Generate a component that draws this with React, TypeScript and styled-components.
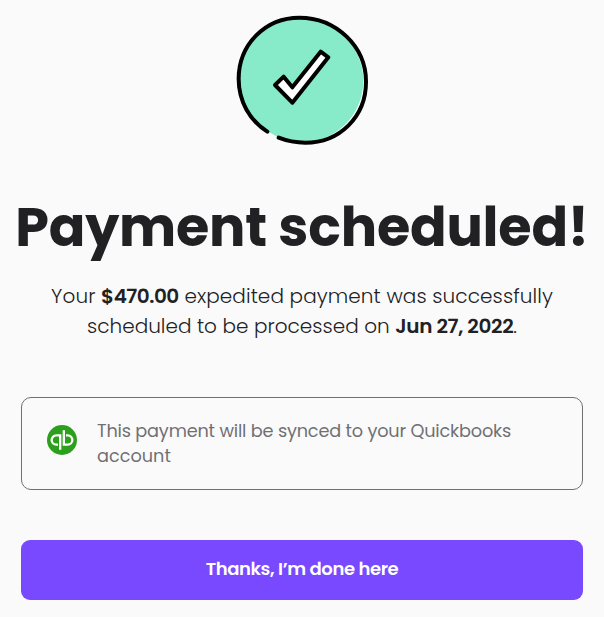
import React from 'react';
import styled, { createGlobalStyle } from 'styled-components';

const GlobalStyle = createGlobalStyle`
  * { box-sizing: border-box; }
  body {
    margin: 0;
    background: #fafafa;
    color: #212124;
    font-family: Poppins, Inter, "Liberation Sans", sans-serif;
  }
`;

const Page = styled.main`
  display: flex;
  flex-direction: column;
  align-items: center;
  width: 604px;
  height: 617px;
  padding: 5px 21px 17px;
  overflow: hidden;
`;

const StatusIcon = styled.svg`
  display: block;
  flex: none;
  width: 150px;
  height: 150px;
`;

const Title = styled.h1`
  margin: 32px 0 0;
  font-size: 54px;
  line-height: 80px;
  font-weight: 700;
  letter-spacing: -0.2px;
  white-space: nowrap;
`;

const Summary = styled.p`
  display: flex;
  flex-direction: column;
  align-items: center;
  margin: 14px 0 0;
  font-size: 20px;
  line-height: 30px;
  font-weight: 300;
`;

const Line = styled.span<{ $tracking: number }>`
  white-space: nowrap;
  letter-spacing: ${({ $tracking }) => $tracking}px;
`;

const Strong = styled.strong<{ $tracking: number }>`
  font-weight: 600;
  letter-spacing: ${({ $tracking }) => $tracking}px;
`;

const Notice = styled.section`
  display: flex;
  align-items: flex-start;
  gap: 20px;
  width: 562px;
  height: 93px;
  margin-top: 56px;
  padding: 20px 25px;
  border: 1px solid #707070;
  border-radius: 10px;
  color: #707074;
`;

const BrandIcon = styled.svg`
  flex: none;
  width: 30px;
  height: 30px;
  margin-top: 7px;
`;

const NoticeText = styled.p`
  display: flex;
  flex-direction: column;
  margin: 0;
  font-size: 17.7px;
  line-height: 25px;
  font-weight: 400;
`;

const DoneButton = styled.button`
  width: 562px;
  height: 60px;
  margin-top: 50px;
  padding: 0 0 3px;
  border: 0;
  border-radius: 9px;
  background: #7849ff;
  color: #fff;
  font: inherit;
  font-size: 18px;
  font-weight: 600;
  letter-spacing: -0.4px;
`;

export default function App() {
  return (
    <>
      <GlobalStyle />
      <Page>
        <StatusIcon viewBox="0 0 450 450" fill="none" aria-hidden="true">
          <ellipse cx="227" cy="226" rx="191" ry="186" fill="#fff" />
          <ellipse cx="222" cy="227" rx="187" ry="186" fill="#87ebca" />
          <path d="M122 380L130 383L155 398L146 410L112 390Z" fill="#fafafa" />
          <path
            d="M121 380C68 347 35 288 35 222C35 118 115 38 217 38C327 38 417 124 417 230C417 335 338 413 235 413C207 413 180 408 155 398"
            stroke="#000" strokeWidth="12" strokeLinecap="round"
          />
          <path
            d="M144 240L170 215L196 247L281 140L304 157L196 293Z"
            fill="#fff" stroke="#000" strokeWidth="12" strokeLinejoin="round"
          />
        </StatusIcon>
        <Title>Payment scheduled!</Title>
        <Summary>
          <Line $tracking={0.1}>
            Your <Strong $tracking={-0.5}>$470.00</Strong> expedited payment was successfully
          </Line>
          <Line $tracking={0.02}>
            scheduled to be processed on <Strong $tracking={-0.35}>Jun 27, 2022</Strong>.
          </Line>
        </Summary>
        <Notice>
          <BrandIcon viewBox="0 0 90 90" fill="none" role="img" aria-label="Quickbooks">
            <circle cx="45" cy="45" r="45" fill="#2ca01c" />
            <path
              d="M39.500 74V31H28a14 14 0 0 0 0 28H33M50.500 16V59H62a14 14 0 0 0 0-28H57"
              stroke="#fff" strokeWidth="7"
            />
          </BrandIcon>
          <NoticeText>
            <Line $tracking={-0.18}>This payment will be synced to your Quickbooks</Line>
            <Line $tracking={0}>account</Line>
          </NoticeText>
        </Notice>
        <DoneButton type="button">Thanks, I’m done here</DoneButton>
      </Page>
    </>
  );
}
